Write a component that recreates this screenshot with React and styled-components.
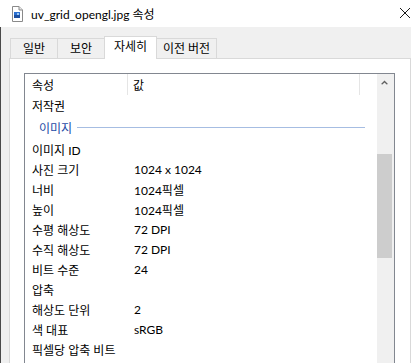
import React from 'react';
import styled, { createGlobalStyle } from 'styled-components';

const GlobalStyle = createGlobalStyle`
  body {
    margin: 0;
    background: #fff;
    font-family: Lato, "Noto Sans CJK KR", sans-serif;
    font-size: 12px;
    color: #000;
  }
`;

const Window = styled.div`
  width: 411px;
  height: 363px;
  overflow: hidden;
  display: flex;
  flex-direction: column;
  background: #fff;
`;

const TitleBar = styled.div`
  height: 27px;
  flex: none;
  display: flex;
  align-items: center;
  padding-left: 12px;
  background: #fff;
`;

const Title = styled.span`
  margin-left: 8px;
  font-size: 12px;
  color: #000;
  flex: 1;
`;

const CloseButton = styled.div`
  width: 10px;
  height: 10px;
  margin-right: 1px;
  margin-top: -2px;
  display: flex;
`;

const Body = styled.div`
  flex: 1;
  display: flex;
  flex-direction: column;
  background: #f0f0f0;
  border-left: 1px solid #4a4a4a;
  padding: 9px 0 0 8px;
  min-height: 0;
`;

const TabStrip = styled.div`
  height: 22px;
  flex: none;
  display: flex;
  align-items: flex-end;
  padding-left: 1px;
`;

const Tab = styled.div`
  position: relative;
  z-index: ${({ $active }) => ($active ? 1 : 0)};
  height: ${({ $active }) => ($active ? '23px' : '20px')};
  margin-bottom: ${({ $active }) => ($active ? '-1px' : '0')};
  margin-left: -1px;
  width: ${({ $w }) => $w}px;
  box-sizing: border-box;
  border: 1px solid #d9d9d9;
  border-bottom: none;
  background: ${({ $active }) => ($active ? '#fff' : '#f0f0f0')};
  display: flex;
  justify-content: center;
  align-items: ${({ $active }) => ($active ? 'flex-start' : 'center')};
  padding-top: ${({ $active }) => ($active ? '1px' : '0')};
  font-size: 12px;
  line-height: 18px;
  &:first-child {
    margin-left: 0;
  }
`;

const Panel = styled.div`
  flex: 1;
  min-height: 0;
  background: #fff;
  border: 1px solid #d9d9d9;
  border-bottom: none;
  padding: 14px 0 0 14px;
  display: flex;
`;

const ListView = styled.div`
  width: 371px;
  height: 320px;
  flex: none;
  box-sizing: border-box;
  border: 1px solid #828790;
  border-bottom: none;
  display: flex;
`;

const List = styled.div`
  flex: 1;
  display: flex;
  flex-direction: column;
`;

const Row = styled.div`
  display: grid;
  grid-template-columns: 103px 232px 1fr;
  height: ${({ $h }) => $h || 20}px;
  align-items: center;
`;

const HeaderCell = styled.div`
  height: 100%;
  display: flex;
  align-items: center;
  padding-left: ${({ $pad }) => $pad}px;
  border-right: ${({ $sep }) => ($sep ? '1px solid #e5e5e5' : 'none')};
  box-sizing: border-box;
`;

const Cell = styled.div`
  padding-left: ${({ $pad }) => $pad}px;
  white-space: nowrap;
`;

const GroupRow = styled.div`
  height: 24px;
  display: flex;
  align-items: center;
  padding-left: 14px;
  padding-right: 12px;
`;

const GroupLabel = styled.span`
  color: #1e4ba6;
`;

const GroupLine = styled.div`
  flex: 1;
  height: 1px;
  margin-left: 5px;
  background: #a6bde2;
`;

const ScrollBar = styled.div`
  width: 17px;
  flex: none;
  background: #f0f0f0;
  display: flex;
  flex-direction: column;
`;

const ArrowButton = styled.div`
  height: 17px;
  display: flex;
  align-items: center;
  justify-content: center;
  padding-right: 2px;
`;

const Thumb = styled.div`
  margin-top: 63px;
  width: 15px;
  height: 104px;
  background: #cdcdcd;
`;

const FileIcon = () => (
  <svg width="11" height="16" viewBox="0 0 11 16">
    <path d="M0.5 0.5 H7 L10.5 4 V15.5 H0.5 Z" fill="#fff" stroke="#8a8a8a" />
    <path d="M7 0.5 V4 H10.5" fill="#e8e8e8" stroke="#8a8a8a" />
    <rect x="2" y="6" width="6" height="6" fill="#2a6fd0" />
    <rect x="2" y="9" width="6" height="3" fill="#1d4fa0" />
    <rect x="5" y="7" width="2" height="2" fill="#9cc8f5" />
  </svg>
);

const CloseIcon = () => (
  <svg width="10" height="10" viewBox="0 0 10 10">
    <path d="M0 0 L10 10 M10 0 L0 10" stroke="#1a1a1a" strokeWidth="1" />
  </svg>
);

const UpArrow = () => (
  <svg width="7" height="5" viewBox="0 0 7 5">
    <path d="M0 4 L3.5 0.5 L7 4 L5.6 4.6 L3.5 2.5 L1.4 4.6 Z" fill="#606060" />
  </svg>
);

const tabs = [
  { label: '일반', w: 48 },
  { label: '보안', w: 48 },
  { label: '자세히', w: 53, active: true },
  { label: '이전 버전', w: 61 },
];

const before = [['저작권', '']];

const rows = [
  ['이미지 ID', ''],
  ['사진 크기', '1024 x 1024'],
  ['너비', '1024픽셀'],
  ['높이', '1024픽셀'],
  ['수평 해상도', '72 DPI'],
  ['수직 해상도', '72 DPI'],
  ['비트 수준', '24'],
  ['압축', ''],
  ['해상도 단위', '2'],
  ['색 대표', 'sRGB'],
  ['픽셀당 압축 비트', ''],
];

const DataRow = ({ name, value }) => (
  <Row>
    <Cell $pad={7}>{name}</Cell>
    <Cell $pad={6}>{value}</Cell>
  </Row>
);

export default function App() {
  return (
    <Window>
      <GlobalStyle />
      <TitleBar>
        <FileIcon />
        <Title>uv_grid_opengl.jpg 속성</Title>
        <CloseButton>
          <CloseIcon />
        </CloseButton>
      </TitleBar>
      <Body>
        <TabStrip>
          {tabs.map((t) => (
            <Tab key={t.label} $w={t.w} $active={t.active}>
              {t.label}
            </Tab>
          ))}
        </TabStrip>
        <Panel>
          <ListView>
            <List>
              <Row $h={21}>
                <HeaderCell $pad={7} $sep>속성</HeaderCell>
                <HeaderCell $pad={5} $sep>값</HeaderCell>
              </Row>
              {before.map(([n, v]) => (
                <DataRow key={n} name={n} value={v} />
              ))}
              <GroupRow>
                <GroupLabel>이미지</GroupLabel>
                <GroupLine />
              </GroupRow>
              {rows.map(([n, v]) => (
                <DataRow key={n} name={n} value={v} />
              ))}
            </List>
            <ScrollBar>
              <ArrowButton>
                <UpArrow />
              </ArrowButton>
              <Thumb />
            </ScrollBar>
          </ListView>
        </Panel>
      </Body>
    </Window>
  );
}
